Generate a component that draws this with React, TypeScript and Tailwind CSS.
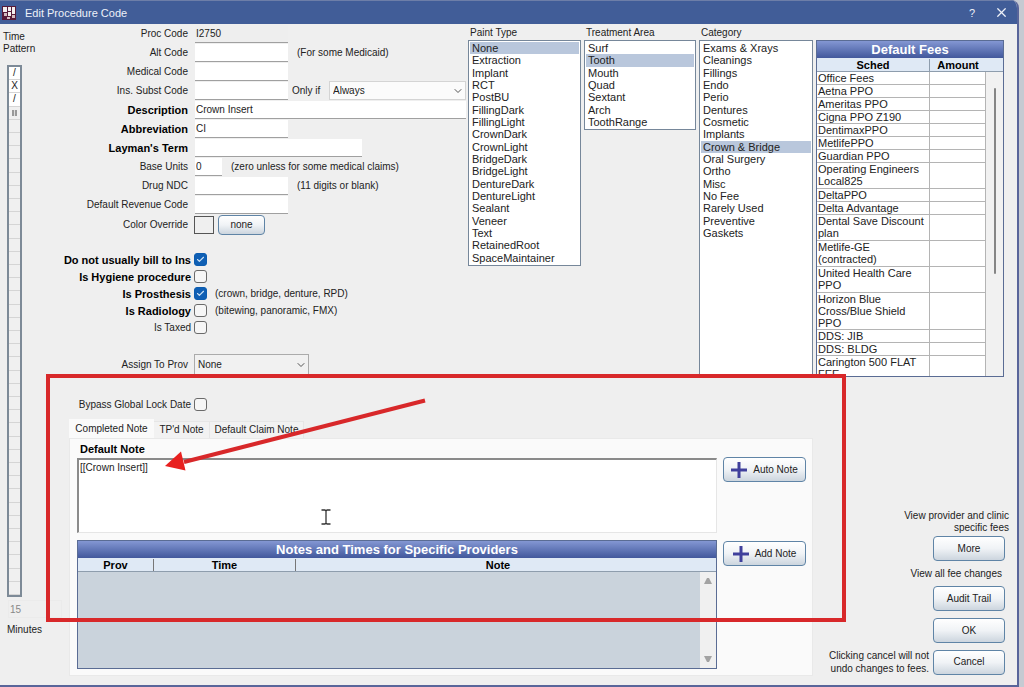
import React from "react";
import { Check, ChevronDown, X } from "lucide-react";

const paintTypes = [
  "None", "Extraction", "Implant", "RCT", "PostBU", "FillingDark", "FillingLight", "CrownDark", "CrownLight",
  "BridgeDark", "BridgeLight", "DentureDark", "DentureLight", "Sealant", "Veneer", "Text", "RetainedRoot", "SpaceMaintainer",
];
const areas = ["Surf", "Tooth", "Mouth", "Quad", "Sextant", "Arch", "ToothRange"];
const categories = [
  "Exams & Xrays", "Cleanings", "Fillings", "Endo", "Perio", "Dentures", "Cosmetic", "Implants", "Crown & Bridge",
  "Oral Surgery", "Ortho", "Misc", "No Fee", "Rarely Used", "Preventive", "Gaskets",
];
const fees = [
  "Office Fees", "Aetna PPO", "Ameritas PPO", "Cigna PPO Z190", "DentimaxPPO", "MetlifePPO", "Guardian PPO",
  "Operating Engineers\nLocal825", "DeltaPPO", "Delta Advantage", "Dental Save Discount\nplan",
  "Metlife-GE\n(contracted)", "United Health Care\nPPO", "Horizon Blue\nCross/Blue Shield\nPPO",
  "DDS: JIB", "DDS: BLDG", "Carington 500 FLAT\nFEE",
];
const rowHeights: Record<number, string> = { 1: "h-[13px]", 2: "h-[26px]", 3: "h-[37px]" };

function Field({ id, label, bold, value = "", width = "w-[93px]", flat, children }: {
  id: string; label: string; bold?: boolean; value?: string; width?: string; flat?: boolean; children?: React.ReactNode;
}) {
  return (
    <div className="flex h-[19px] items-center">
      <label htmlFor={id} className={"w-[126px] shrink-0 text-right " + (bold ? "text-[11px] font-bold text-black" : "")}>{label}</label>
      <input
        id={id}
        defaultValue={value}
        className={"ml-[7px] h-[18px] shrink-0 border-b border-[#a0a0a0] px-px outline-none " + width + (flat ? " bg-[#eeeeee]" : " bg-white")}
      />
      {children}
    </div>
  );
}

function Tick({ id, label, bold, checked, note }: { id: string; label: string; bold?: boolean; checked?: boolean; note?: string }) {
  return (
    <div className="flex h-[17px] items-center">
      <label htmlFor={id} className={"w-[129px] shrink-0 text-right " + (bold ? "text-[11px] font-bold text-black" : "")}>{label}</label>
      <span className="relative ml-[3px] flex size-[13px]">
        <input
          id={id}
          type="checkbox"
          defaultChecked={checked}
          className="peer size-[13px] appearance-none rounded-[3px] border border-[#6a6a6a] bg-[#f6f6f6] checked:border-[#0b5cb0] checked:bg-[#0f5fb4]"
        />
        <Check className="pointer-events-none absolute top-[2px] left-[2px] hidden size-[9px] text-[#cfe4f7] peer-checked:block" strokeWidth={3} />
      </span>
      {note && <span className="ml-2">{note}</span>}
    </div>
  );
}

function Drop({ id, value, width, height, look }: { id: string; value: string; width: string; height: string; look: string }) {
  return (
    <span className={"relative flex shrink-0 " + width + " " + height}>
      <select id={id} className={"w-full appearance-none border px-[3px] outline-none " + look}>
        <option>{value}</option>
      </select>
      <ChevronDown className="pointer-events-none absolute top-1/2 right-[2px] size-3 -translate-y-1/2 text-[#555]" strokeWidth={2} />
    </span>
  );
}

function ListBox({ title, items, selected, width, rows, fill }: {
  title: string; items: string[]; selected: string; width: string; rows: string; fill?: boolean;
}) {
  return (
    <section className={"flex shrink-0 flex-col " + width}>
      <h2 className="h-4 pl-[2px] leading-[18px]">{title}</h2>
      <div className={"border border-[#76879a] bg-white p-px text-[11px] " + (fill ? "flex-1" : "")}>
        <ul role="listbox" aria-label={title} className={"grid auto-rows-fr " + rows}>
          {items.map((t) => (
            <li key={t} role="option" aria-selected={t === selected} className={"flex min-h-0 items-center pl-[2px] leading-3 " + (t === selected ? "bg-[#b9c7dc]" : "")}>
              {t}
            </li>
          ))}
        </ul>
      </div>
    </section>
  );
}

function Btn({ children, className }: { children: React.ReactNode; className: string }) {
  return (
    <button type="button" className={"flex shrink-0 items-center justify-center rounded-[4px] border border-[#5f84a6] bg-linear-to-b from-white via-[#f0f3f6] to-[#ccd5de] " + className}>
      {children}
    </button>
  );
}

function Plus() {
  return (
    <svg viewBox="0 0 16 16" className="mr-[6px] size-4" aria-hidden="true">
      <path d="M8 0v16M0 8h16" stroke="#40409c" strokeWidth="3" />
    </svg>
  );
}

export default function App() {
  return (
    <div className="flex min-h-screen flex-col bg-[#c6cad2] pr-[5px] font-['Liberation_Sans',Arial,sans-serif] text-[10px] leading-3 text-[#222]">
      <div className="relative flex flex-1 flex-col overflow-hidden rounded-tr-lg border-r-2 border-b-2 border-[#59659a] bg-[#efefef]">
        <header className="flex h-6 items-center border-t border-[#6d7ea8] bg-[#415d98] pl-[2px] text-[#eef1f8]">
          <svg viewBox="0 0 14 14" className="size-[14px]" aria-hidden="true">
            <path fill="#571b38" d="M0 0h14v14H0z" />
            <path fill="#f4f0ef" d="M1 1h4v5H1zM6 1h3v4H6zM10 1h3v7h-3zM6 6h3v4H6z" />
            <path fill="#d5bcc0" d="M2 7h3v3H2zM5 11h3v2H5zM10 9h3v3h-3z" />
          </svg>
          <h1 className="ml-[9px] flex-1 text-[11px]">Edit Procedure Code</h1>
          <button type="button" aria-label="Help" className="w-4 text-[11px]">?</button>
          <button type="button" aria-label="Close" className="mr-2 ml-[14px]"><X className="size-[15px]" strokeWidth={2} /></button>
        </header>

        <div className="flex flex-1">
          <aside className="flex w-[62px] shrink-0 flex-col pt-[7px]">
            <h2 className="h-[34px] pl-[3px]">Time<br />Pattern</h2>
            <div className="ml-[7px] grid h-[532px] w-[15px] auto-rows-fr border-2 border-[#7d8a97] bg-[#ececec]">
              {Array.from({ length: 40 }, (_, i) => (
                <div key={i} className={"flex min-h-0 items-center justify-center overflow-hidden border-b border-[#d5d5d5] leading-3 " + (i < 3 ? "bg-white" : "bg-[#f0f0f0]")}>
                  {["/", "X", "/"][i] ?? ""}
                  {i === 3 && <span className="h-[6px] w-[5px] border-x-2 border-[#999] bg-[#ddd]" />}
                </div>
              ))}
            </div>
            <input aria-label="Minutes" defaultValue="15" className="mt-[3px] ml-2 h-[18px] w-[54px] border border-[#ebebeb] px-px text-[#888] outline-none" />
            <span className="mt-[6px] ml-[7px]">Minutes</span>
          </aside>

          <main className="flex min-w-0 flex-1 flex-col">
            <div className="flex h-[353px] gap-[3px] pr-[13px]">
              <form className="min-w-0 flex-1">
                <Field id="proc" label="Proc Code" value="I2750" flat />
                <Field id="alt" label="Alt Code"><span className="ml-[9px]">(For some Medicaid)</span></Field>
                <Field id="med" label="Medical Code" />
                <Field id="subst" label="Ins. Subst Code">
                  <label htmlFor="only" className="ml-1 w-[37px] shrink-0">Only if</label>
                  <Drop id="only" value="Always" width="w-[137px]" height="h-[19px]" look="border-[#d4d4d4] bg-[#fbfbfb]" />
                </Field>
                <Field id="desc" label="Description" bold value="Crown Insert" width="w-[271px]" />
                <Field id="abbr" label="Abbreviation" bold value="CI" />
                <Field id="layman" label="Layman's Term" bold width="w-[167px]" />
                <Field id="units" label="Base Units" value="0" width="w-[27px]"><span className="ml-[9px]">(zero unless for some medical claims)</span></Field>
                <Field id="ndc" label="Drug NDC"><span className="ml-[9px]">(11 digits or blank)</span></Field>
                <Field id="rev" label="Default Revenue Code" />
                <div className="flex h-[21px] items-center">
                  <span className="w-[126px] text-right">Color Override</span>
                  <button type="button" aria-label="Color Override" className="ml-[6px] h-[18px] w-5 border border-[#555]" />
                  <Btn className="ml-1 h-5 w-[47px]">none</Btn>
                </div>
                <div className="mt-4">
                  <Tick id="bill" label="Do not usually bill to Ins" bold checked />
                  <Tick id="hyg" label="Is Hygiene procedure" bold />
                  <Tick id="pros" label="Is Prosthesis" bold checked note="(crown, bridge, denture, RPD)" />
                  <Tick id="rad" label="Is Radiology" bold note="(bitewing, panoramic, FMX)" />
                  <Tick id="tax" label="Is Taxed" />
                </div>
                <div className="mt-[18px] flex h-[22px] items-center">
                  <label htmlFor="prov" className="mr-[6px] w-[126px] text-right">Assign To Prov</label>
                  <Drop id="prov" value="None" width="w-[115px]" height="h-[22px]" look="border-[#ababab] bg-[#f1f1f1]" />
                </div>
              </form>
              <ListBox title="Paint Type" items={paintTypes} selected="None" width="w-[113px]" rows="h-[222px]" />
              <ListBox title="Treatment Area" items={areas} selected="Tooth" width="w-[112px]" rows="h-[86px]" />
              <ListBox title="Category" items={categories} selected="Crown & Bridge" width="w-[114px]" rows="h-[197px]" fill />
              <section className="mt-4 flex w-[188px] shrink-0 flex-col overflow-hidden border border-[#5a6c94] bg-white">
                <h2 className="h-[17px] shrink-0 bg-linear-to-b from-[#8497d3] to-[#42589c] text-center text-[13px] leading-[18px] font-bold text-white">Default Fees</h2>
                <div className="relative min-h-0 flex-1 overflow-hidden bg-[#f1f1f1]">
                  <table className="w-full table-fixed border-separate border-spacing-0 text-[11px]">
                    <colgroup><col className="w-[113px]" /><col /><col className="w-[17px]" /></colgroup>
                    <thead>
                      <tr className="h-[14px] bg-[#dfe9f5] text-black">
                        <th className="border-b border-[#8e9dad] p-0 leading-3"><div className="border-r border-[#8e9dad]">Sched</div></th>
                        <th className="border-b border-[#8e9dad] p-0 leading-3">Amount</th>
                        <th className="border-b border-[#8e9dad] p-0" />
                      </tr>
                    </thead>
                    <tbody>
                      {fees.map((f) => (
                        <tr key={f} className={rowHeights[f.split("\n").length]}>
                          <td className="border-r border-b border-[#b4b4b4] bg-white p-0 pl-px align-top leading-3 whitespace-pre">{f}</td>
                          <td className="border-r border-b border-[#b4b4b4] bg-white p-0" />
                          <td className="p-0" />
                        </tr>
                      ))}
                    </tbody>
                  </table>
                  <span className="absolute top-[30px] right-[7px] h-[186px] w-[2px] rounded bg-[#858585]" />
                </div>
              </section>
            </div>

            <div className="flex flex-1">
              <div className="ml-[7px] flex min-w-0 flex-1 flex-col pt-[19px]">
                <div className="-ml-[7px]"><Tick id="lock" label="Bypass Global Lock Date" /></div>
                <div role="tablist" className="mt-[6px] flex h-[19px] items-end">
                  <button role="tab" aria-selected="true" type="button" className="h-[19px] w-[85px] bg-[#fafafa]">Completed Note</button>
                  <button role="tab" aria-selected="false" type="button" className="h-[17px] w-14 border-t border-r border-[#e6e6e6] bg-[#f2f2f2]">TP'd Note</button>
                  <button role="tab" aria-selected="false" type="button" className="h-[17px] w-[94px] border-t border-r border-[#e6e6e6] bg-[#f2f2f2]">Default Claim Note</button>
                </div>
                <div className="flex h-[238px] gap-[6px] border border-[#e9e9e9] bg-[#fafafa] pr-[6px] pl-[7px]">
                  <div className="flex min-w-0 flex-1 flex-col">
                    <label htmlFor="note" className="h-[19px] pl-[3px] text-[11px] leading-[20px] font-bold text-black">Default Note</label>
                    <textarea id="note" defaultValue="[[Crown Insert]]" className="h-[75px] resize-none border border-t-2 border-l-2 border-[#e6e6e6] border-t-[#8a8a8a] border-l-[#8a8a8a] bg-white px-px py-[2px] outline-none" />
                    <section className="mt-[7px] flex h-[129px] flex-col border border-[#5a6c94] bg-[#cad3dc]">
                      <h2 className="h-[17px] shrink-0 bg-linear-to-b from-[#8497d3] to-[#42589c] text-center text-[13px] leading-[18px] font-bold text-white">Notes and Times for Specific Providers</h2>
                      <table className="w-full table-fixed border-separate border-spacing-0 text-[11px]">
                        <colgroup><col className="w-[76px]" /><col className="w-[142px]" /><col /></colgroup>
                        <thead>
                          <tr className="h-[14px] bg-[#dfe9f5] text-black">
                            <th className="border-b border-[#8e9dad] p-0 leading-3"><div className="border-r border-[#777]">Prov</div></th>
                            <th className="border-b border-[#8e9dad] p-0 leading-3"><div className="border-r border-[#777]">Time</div></th>
                            <th className="border-b border-[#8e9dad] p-0 pr-4 leading-3">Note</th>
                          </tr>
                        </thead>
                      </table>
                      <div className="flex w-4 flex-1 flex-col items-center justify-between self-end bg-[#f0f0f0] py-[6px]">
                        <svg viewBox="0 0 8 6" className="h-[6px] w-2" aria-hidden="true"><path d="M0 6h8L5 0H3z" fill="#a3a3a3" /></svg>
                        <svg viewBox="0 0 8 6" className="h-[6px] w-2" aria-hidden="true"><path d="M0 0h8L5 6H3z" fill="#a3a3a3" /></svg>
                      </div>
                    </section>
                  </div>
                  <div className="flex flex-col gap-[59px] pt-[18px]">
                    <Btn className="h-[25px] w-[83px]"><Plus />Auto Note</Btn>
                    <Btn className="h-[25px] w-[83px]"><Plus />Add Note</Btn>
                  </div>
                </div>
              </div>

              <div className="flex w-[204px] shrink-0 flex-col items-end justify-end pr-3 pb-[10px]">
                <p className="-mr-[4px] mb-[2px] text-right">View provider and clinic<br />specific fees</p>
                <Btn className="h-[25px] w-[72px]">More</Btn>
                <p className="mt-[7px] mb-[6px] pr-[3px]">View all fee changes</p>
                <Btn className="h-[25px] w-[72px]">Audit Trail</Btn>
                <Btn className="mt-[7px] h-[25px] w-[72px]">OK</Btn>
                <div className="mt-[6px] flex items-center gap-1">
                  <p className="text-right leading-[13px]">Clicking cancel will not<br />undo changes to fees.</p>
                  <Btn className="h-[25px] w-[72px]">Cancel</Btn>
                </div>
              </div>
            </div>
          </main>
        </div>

        <div className="pointer-events-none absolute top-[374px] right-[171px] left-[46px] h-[248px] border-4 border-[#d8282a]">
          <svg viewBox="0 0 270 80" className="absolute top-[17px] left-[110px] h-20 w-[270px]" aria-hidden="true">
            <path d="M265 5.500 24 67" stroke="#d8282a" strokeWidth="4" />
            <path d="M5 71 21 56.500 25.500 75.500z" fill="#e8201f" />
          </svg>
          <svg viewBox="0 0 10 16" className="absolute top-[131px] left-[271px] h-4 w-[10px]" aria-hidden="true">
            <path d="M.5 1H4l1 1 1-1h3.500M.5 15H4l1-1 1 1h3.500M5 2v12" fill="none" stroke="#333" strokeWidth="1.300" />
          </svg>
        </div>
      </div>
    </div>
  );
}
